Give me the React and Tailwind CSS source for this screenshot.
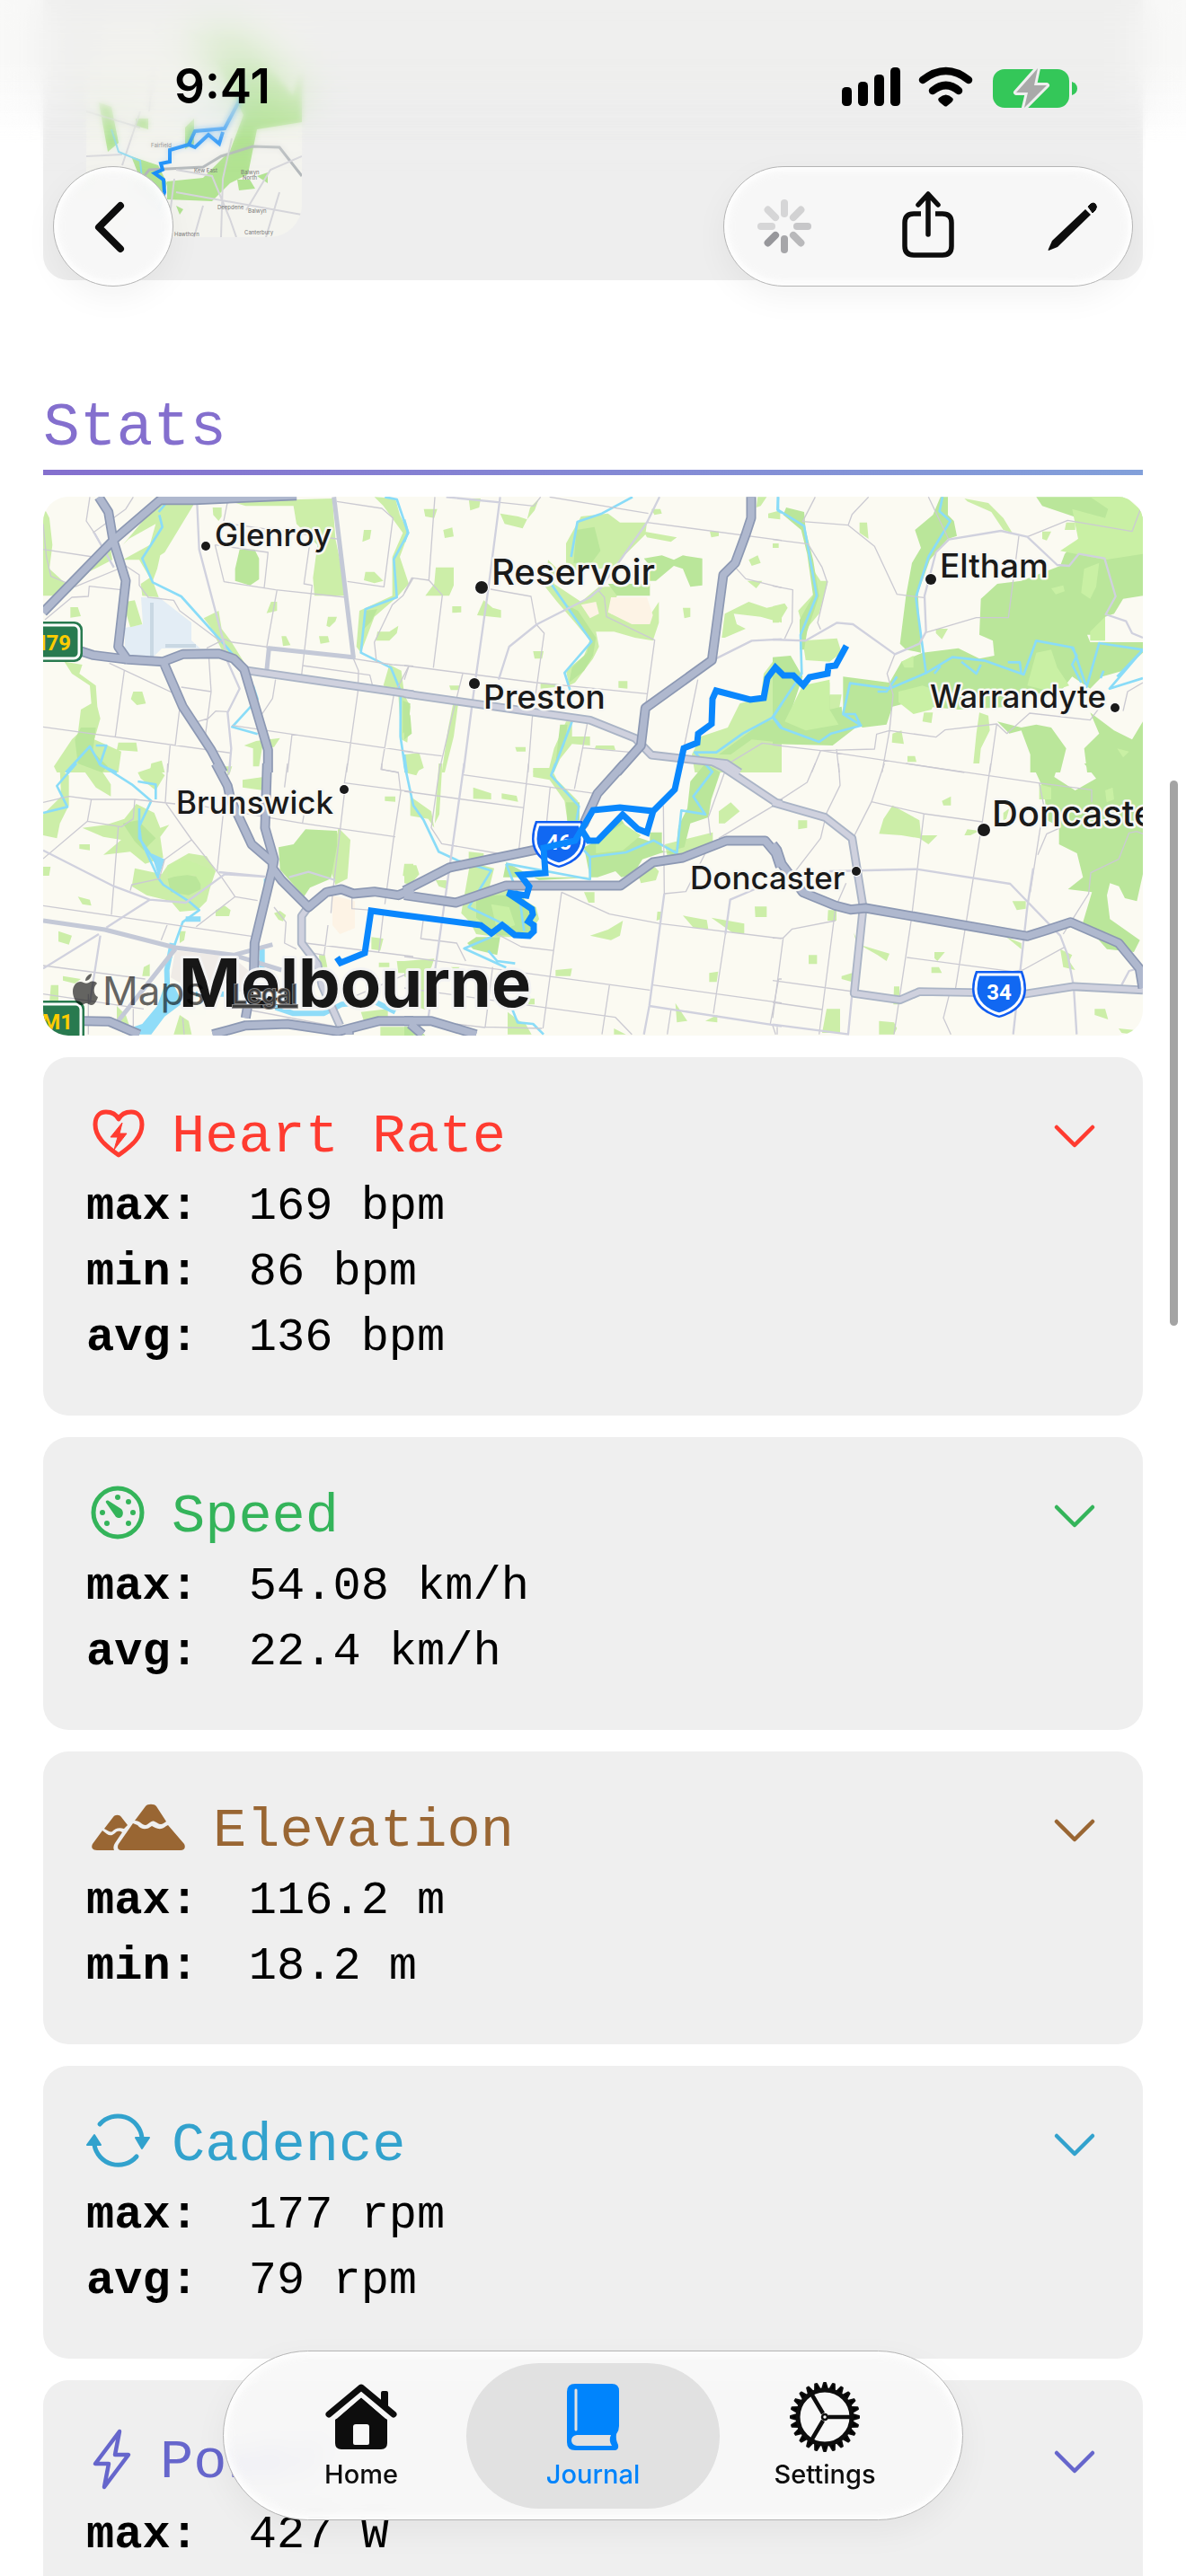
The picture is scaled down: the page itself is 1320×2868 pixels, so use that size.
import { useState } from "react";

const tiles = [
  {
    x: -8, y: -13,
    parks: "M24 70L45 110 55 200 45 280 100 330 255 250 250 215 130 340 100 370 24 370Z M435 60H530L430 225 415 235 405 280 390 320 410 375 355 370 350 330 380 310 345 250 290 250 380 200 400 130 310 180 290 200 390 80Z M650 55L990 45 1000 180 1040 370 930 370 925 310 940 200 870 130 860 70 700 70Z M590 75h30v30l-10 15-18-20Z M300 390l30-5 25 80-40 10-15-50Z M115 408h25l10 30-35 5Z M785 390h20v30l-35 8Z M560 445l50-25 10 60 30 40 50 80-10 10-70-60-40-80Z M970 470l5-30 30 0-5 15-20 20Z M945 505h30l5 20-30 5Z M820 505h15l15 30-25 3Z M1100 290l30 0 30 30-30 8-35-10Z M1095 150h25l-5 30-25 10Z M1140 490h40l30-20-5 25-25 25-45 0Z M1130 40L1200 45 1215 100 1245 160 1215 240 1245 330 1205 375 1130 440 1085 560 1070 540 1080 420 1190 370 1190 240 1225 160 1160 70Z M95 590l60 10-10 30 55 40 5 70 10 40-20 70 90 40-10 70H70l-10-20 60-90 20-20 10-80 35-20-5-60-60-40Z M325 690h30l12 40-30 5-20-20Z M275 860h60l5 30-70-5Z M695 870l40-15 80-10-20 30-40 5-10 60-20 0 0-60Z M1180 600l40 20 10 80 20 40-10 120-20-10-10-150-50-30Z M385 930l35-10 10 40h-50Z",
    dark: "M680 215h50l15 30v70l-30 20-50-15v-40Z M150 810l50 0-10 80 50 50-20 20-80-30-10-80Z M1100 420l40-5-20 40-30 30Z M1225 720l25 10-5 80-20 20Z",
    minor: "M180 40L168 120 195 160 260 275M325 40L300 80 190 160M24 215L190 240M24 130L35 240 50 305 110 330M130 340L300 270 345 300V335L375 375 460 385 480 420 620 525M30 450L120 375 175 372 178 338 285 350M245 595L480 705M24 808L650 895M295 620L265 840M480 745L465 870M448 870L440 960M485 675L585 690 577 570M585 690L565 840M540 790L575 780 600 755 640 757M570 545L630 515 655 525 1060 580 1190 600 1260 605M640 55L625 130 650 130 1005 180M598 200L775 225 762 345M598 200L628 323 800 350 1035 375M915 190L895 330 922 335 887 635M805 350L770 545M1005 55L1155 78 1192 110 1162 340 1040 322M1260 310L1225 370 1190 400 1130 525 1137 590M890 603L1115 635 1125 675M1060 580L1077 620 1075 690 1037 960M800 650L790 713 755 765M655 803L1260 892M855 833L840 960M1245 605L1195 700 1152 950 1210 960",
    secondary: "M538 60L545 215 628 530 640 590 680 680 640 760 652 880 645 960M195 160L260 275",
    trunk: "M995 40L1060 575 778 545 770 625",
    major: "M695 618L1260 700",
    motorway: "M210 40L242 90 258 185 300 320 275 540 310 590M24 425L258 185 415 50 530 50 870 35M120 545L190 568 310 583 425 590 490 565 610 563 660 580 695 615 775 885V960M425 590L490 740 585 885 625 960",
    water: "M435 60L410 90M412 100L422 140 355 245 390 325 485 372 640 545 660 570M725 670L740 715 655 808 740 832M1165 40L1205 48 1243 160 1195 248 1205 375 1100 415 1085 560 1185 610 1218 690 1217 840 1235 960M100 960L180 873 215 935 270 960M200 870H235L215 930",
  },
  {
    x: 402, y: -13,
    parks: "M320 95l60 10 30 10-15 30-60-15Z M65 80h45l-10 30-30-5Z M215 45h40l-5 30-30 10Z M450 45l-15 40-25 30 10-40Z M130 150l30-8 5 30-30 5Z M105 275h60v60l-15 35-80 0 30-40Z M160 405h30v20l-30 2Z M245 430l20-45 30 25 28 8v25l-80-8Z M430 555h35l-5 25-25 0Z M715 655h30v25l-30-3Z M590 105l90-10 40 30h90l-5 40-60 60-50 50-100 10-55 0 0-90Z M480 250l30 30-10 50 90 60 60-50 160 0-100 30-20 60 120 20 40-60v70l-20 60-60-10-70-20-60 0 10 50-20 40-60 80-20 10-10-50 60-50 20-50-50-60-60-70-40-50Z M800 155l110 20-20 15-80-15Z M825 80h30l5 15-25 5Z M1020 155h30v15l-25 5Z M1060 510l10-80 80-40 60 20 50-10v60l-70-20-90-10 10 35 30 15-70 30Z M1150 250l30-15 10 25-30 10Z M1145 320h50l-20 25Z M930 410h25v30l-20 5Z M150 670h35l-5 15-25 0Z M455 660l60 5-10 10-50 5Z M370 875h35v15h-30Z M165 720l-20 100-20 140 10 0 30-120 15-110Z M0 900l50-5 15 50-30 15H0Z M540 790h20v50h60v30l-60-5-40 50-20 45h-20l20-80Z M640 870h60l5 15-70-3Z M435 945h30v15h-35Z M1180 40h30l-20 30-15 5Z M1215 95l40-10v30l-40-5Z M1238 580h22v380H970l-10-60 30-60 90-30 40-80 70-20 10-80Z",
    dark: "M800 245l60-10 40 15 30-15 65 10v90l-40 5-25-60-30-10-60 50-40 0 20-50Z M680 330h140v40h-110Z M575 150l60-10 20 80-30 40-60 0Z M540 400l40 20 60 90-10 60-30 50-50 40 10-50 50-50 10-50Z M0 730l20 40 5 60-25 20Z M520 800h25l-10 70-30 60Z M1050 900l150-110 60-10v80l-100-10-70 50Z",
    beige: "M690 375h120l20 60-10 30-60 0-80-40Z M590 400l50-10 10 40-30 15Z",
    minor: "M102 40L82 318 25 310 0 360M82 318L127 368 97 610M0 603L440 660 810 697M195 630L160 770 120 940M288 348L423 372 440 465 467 495 427 780 413 960M455 40L432 70 320 58M485 40L815 95M810 125L1260 185M1105 275L1140 313 1260 343M648 352L668 375 675 440 836 518 805 745M612 790L580 960M597 878L760 893M980 650L935 870M0 890L125 905M1075 935L1195 862 1260 870M15 605L0 650",
    secondary: "M320 40L280 350 232 690 197 960M852 40L810 125 655 345 620 375 443 465 350 540 315 650M140 40L320 58M1040 580L1160 520 1260 515",
    major: "M0 697L620 785 770 845 825 902 1075 930 1120 960",
    motorway: "M1158 40V110L1140 165 1105 260 1065 300 1027 585 805 745 790 870 710 960",
    water: "M0 115L12 158 0 190M762 40L660 95 578 123 557 240M490 330L625 523 535 627 555 690M560 790L495 960M1248 40V85l12 8M1260 730L1232 775 1130 830 1042 893H970L1030 960M1232 775L1260 810M0 900L8 960",
  },
  {
    x: 812, y: -13,
    parks: "M0 405l40-10 10 15-30 50H0Z M0 195h20v15H0Z M120 260l40 60 25 0-30 110-50 60-20-70 55-60Z M640 45l80 15 50 50 30 50-30-10-40-60-80-35Z M290 125h25l5 55-30-20Z M545 480h40l-20 35-20-20Z M400 830l30-10 8 45-40-5Z M450 905h25l5 20-30 0Z M505 760h30l-5 35-30-5Z M690 760l30 10 5 50-30 60-5 50h-20l10-100Z M900 155h30l-15 30-15-5Z M980 125l30 0 0 25-35 0Z M100 520L215 512 230 560 190 590 110 585Z M190 700l40 0-10 60-40 0Z",
    dark: "M0 575L60 570 100 640 60 760 110 700 190 660 190 750 230 740 235 770 290 800 200 870 0 865Z M45 75l60 15 5 60 25 100 20 120-40 120-10 60-15 0 0-100 45-80-20-140-20-80-60-50Z M540 40h45v60l20 20 10 50-30 10-60 70-40 110 10 200-50-10-20-20 20-160 20-110 30-50-20-60 60-50 25-60Z M235 640L390 660 430 590 500 560 620 545 690 580 740 570 735 520 690 500 695 380 750 330 830 320 960 270 975 230 1020 180V110L900 70 880 40H1170L1236 90V370L1170 380 1140 430 1110 440V500L1050 500 1060 525H1236V560L1170 620 1100 640 1060 680 1000 640 960 690 860 700 800 740 620 750 520 740 480 720 400 740 380 800 300 810 270 790 235 770Z M750 790l80 20 50-10 50 10 50 70-20 80-100 0v-60l-30-80-40 10Z M1060 760l80 60 60 30 36-60v170H1050l-10-80 50-50Z",
    light: "M1000 80L1110 110 1120 80 1060 40H1180L1236 90V230L1110 250 960 220 1020 180Z M880 560l50-10 20 60 40 60-60 20-80-20Z M420 690l80-20 60 20-30 60-60 15-50-40Z M1040 280l50-20-10 80-20 40-30-20Z M1060 490l50-50v80h-50Z M430 590l40-20 0 40-30 0Z M930 345l40-10 5 20-30 10Z M100 670l90-20 0 100 30 50-110 20-70-30Z M1150 880l40 10-20 20Z",
    minor: "M142 40L100 122 252 134 340 205 415 365 505 376M252 134L265 98 320 40M520 40L588 182M822 170L787 443H680L510 493M0 182L118 197 165 275 182 325 150 460 160 482M0 337L67 350 65 458 40 513M850 173L985 118 1200 155 1228 80M408 565L382 630 402 700 390 820 365 960M0 868L160 887 640 960M130 960L160 887 340 882 347 832 390 820 545 842 575 818 748 798 782 830 858 762 1060 785 1090 745M748 798L725 960M213 882L222 960M1170 755L1185 690 1236 660",
    secondary: "M0 516L110 520 215 460 268 465 408 565 490 530 512 490 507 370 545 225 588 182 762 153 850 173 950 267 990 270 1022 230 1108 245 1145 372 1112 432 1180 455 1200 495 1236 510",
    water: "M18 40L16 82 105 137 147 370 93 500 97 630 0 775 25 810 155 858 195 830 295 803 235 765 258 662 390 680 512 628 478 375 520 240 593 120 557 88 567 40M512 628L600 575 710 587 838 633 880 520 1003 543 1048 675 1090 528 1236 550 1125 680 1236 645M630 590L680 630 695 600M785 592H825L830 630M350 690H380L415 640M540 630L560 605M1000 545L1015 570 1000 600 1030 660M1105 620L1095 645M240 765h35l20 40M1236 550L1150 640",
  },
  {
    x: -8, y: 297,
    parks: "M80 20l30 20v100l-30 60-10 50-46-10V170l60-60Z M150 10h60l40 60v40l-50-30Z M335 135l60 30 20 50 30-10-30 40 10 70-60 20-50-40-90 10 60-50-60-10-70-30 80-10 60-20Z M440 340l70-40 60 10 30 50-20 60-10 40-30 30-60 5-30-35-80-20-50-30 10-60 90 20Z M145 270h35v20l-35-5Z M24 345h25l-5 30H24Z M140 445l40 10 5 20-30-5Z M75 560l45 15-10 30-35-10Z M600 490l30-15 20 15-5 20-45 0Z M795 500l20-8 20 15-10 20-15-5Z M690 55l70-10v45l-70-10Z M1165 110h35v18l-35-3Z M1010 215l40 40-10 130-40 20-20-60Z M1230 335h30v50l-35-10Z M360 680l20-10v40h-25Z M50 740h25v60H45Z M90 710l60 10-20 15-40-10Z M270 810l30 30 20 60h-30l-20-40Z M480 840l30 20 10 45h-60Z M1085 830l90-10v40h-80Z M945 640h20l8 40h-25Z M1120 580l40 5-10 40-30-5Z M1145 665h35v15h-35Z M1205 660h55v40h-50Z M480 560h20l-5 30-15 10Z M340 30l60-20 30 30-30 50-50-40Z M1150 880h110v30h-110Z M625 10h30l-10 30Z",
    dark: "M810 280l50-10 40-50 105 5v50l-20 110-70 30-20 30-80-90Z M440 385l50-15 60 10v40l-40 20-60-10Z M290 200l50-10 60 60-40 40-30-30Z",
    light: "M440 340l60-20 100 40-40 60-30-50-90 10Z",
    beige: "M990 440l75 20v90l-50 20-25-30Z",
    built: "M465 625l190 20 70 60-20 60-220-30-35-20Z",
    minor: "M24 130L110 110 185 120H330L465 135M440 0L432 130 520 255 620 380 665 445 740 458M185 120L172 193 24 318M172 193L285 212 325 185 330 120M275 212L252 505M520 255L430 320 412 385 320 405 315 425M24 475L725 578M665 445L535 545M625 170L605 360M540 140L890 200 1200 245M890 200L895 170M650 0L640 40M840 0L830 80M1040 0L1030 65 1260 95M1155 0V20L1210 30 1218 95 1195 245 1165 470M1030 100L990 440 985 500M1055 430V485L1120 490M795 480L835 530 830 600 870 620M900 600L1260 645M975 540L962 640 905 630M1160 500L1145 630M24 675L365 720M24 770L360 820M440 535L418 590M325 820V905M175 770V905M720 825L1060 890M1245 700L1035 790M490 850L495 905",
    secondary: "M24 290L260 410 380 455 500 465 630 370 765 378M380 455L235 548M24 685L210 570M215 575L180 800M610 363L765 378M845 380L910 362 1000 390",
    trunk: "M24 525L230 555 465 615 660 640 820 690M465 620L275 860M660 640L790 605",
    major: "M905 485L887 510V600L940 670 955 740 1015 875",
    motorway: "M600 0L640 75 650 120 720 270 790 330M772 0L765 215 795 320 790 350M790 350L730 600 728 690 700 850M790 330V350L820 390 910 480 970 430 1020 420 1060 435 1130 428 1210 440 1260 420M160 860L245 862 345 905M590 905L700 875 840 870 1010 895 1145 860H1260M1045 890v15",
    water: "M135 0L70 75 105 145 24 165M210 0L320 70 385 125 345 210 350 255 410 385 425 405 510 460 545 490 490 530 465 600 437 690 440 770M340 60L400 70V120M345 150V250L400 330M765 385V440",
    river: "M455 600L437 690 440 800M530 770H650M755 620V700M800 815L860 835H960L1020 805 1130 795 1200 830M500 520H550",
    lake: "M430 740h30l30 60-60 45-45 60h-60l-30-15 60-20 50-60Z M385 300l45 20-20 60Z",
  },
  {
    x: 402, y: 297,
    parks: "M0 340h40l10 30-30 35-20-5Z M215 295l50 5v20h-50Z M230 80l60 20v20l-60-2Z M325 100l50 8 5 20-55-10Z M20 110l70 50 10 55-20-30-60-10Z M0 0h60l-20 40-40-10Z M115 0h12l-10 170-15 30Z M430 15h60l20 40 70 70 5 80-40-10-10-70-50-70-55-10Z M105 390h35l5 30-30-10Z M220 330l80 20-20 80 60-10 100 60 10 40-40 60H310l-70-10-20-40-30-30Z M620 575l60-20 50-30-10 50-30 15Z M1050 160l40-30 30 30-50 40h-20Z M1170 478h40v35h-38Z M930 508l80 15 5 30-50-5Z M1025 515l110 20v35l-40-5Z M1018 700l30-5-5 35h-25Z M905 800l40 60-35 5Z M1005 860l40-20v25Z M505 690l55-5-5 25h-50Z M700 885l40 20h-40Z M345 830l40 30 20 10 20 35h-80Z M845 495h15l-3 25-15 5Z M0 660l100-8-10 30-20 10v130l-30-10-20-90-20-10Z M600 430h35v35h-20Z M410 785h25v20h-20Z M155 680h30l-10 10Z M780 370l50-30 20 20-10 30-50 10Z M870 270l160-40 0 30-100 50-50 10Z",
    dark: "M340 330l110 60 170-10-20-100 60-30 60-70 40 60 60 20 0-30h40l0 60 45 20 10-100 30-60 10-90 50-60 50 30-30 90-10 60-60 20-20 80-80 20-60 20-30 50-40 10-20-20-60 20H330Z M240 440l150 0 40 50-10 80-110 5-70-60Z M240 580h80l-10 60-80-20-20-20Z M540 130h45v60l-40 10Z M0 880h40l30 28H0Z",
    light: "M640 260l90-60 60 40-60 50-90 10Z M290 470l60 10 20 60-60 20Z",
    minor: "M0 93L400 148M197 38L635 100M415 0L383 285M120 0L90 215 125 268 310 300M487 80L475 200M585 0L568 85M865 140L868 435 940 428 1020 270M1080 0L1015 180 1022 240M1235 140L1050 250M525 430L685 503 855 535 1260 585M525 430L463 885M65 510L55 585 175 600 205 660M310 570L390 612 500 625M0 645L820 757M830 740L1260 800M685 740L660 905M0 750L705 848 760 905M295 680L270 880 460 885M1260 720L1250 720 1222 870M1072 570L1032 835M890 825L878 905M130 865L270 882M1245 880v25",
    secondary: "M200 0L80 850M868 435L818 810 800 905M818 810L1260 878M1170 420L1088 455 1072 570",
    major: "M1030 -5L1060 10 1240 130 1260 135",
    motorway: "M735 0L645 100 600 200 550 260 440 288 150 348 0 425M0 440L172 465 340 408H722L830 330 930 315 1075 258H1205L1240 300 1255 345M0 860H90L240 905M20 870L60 905",
    water: "M0 0L30 140 65 190 115 295 180 325 290 358 215 480 350 545M505 0L490 40 583 143 575 190M290 580L200 618 340 682M360 820L378 865 430 870 465 905M340 335L620 387V312L600 290M620 312L740 297 832 257 910 300 925 157 1005 170 965 110 1030 25M340 335L385 450 400 560M280 625L310 660 370 668",
  },
  {
    x: 812, y: 297,
    parks: "M370 185l30-45 90 50 5 50h55l-30 30-30-20-60-10-75-5Z M565 125l30-15v30h-25Z M85 190h30v25l-30 5Z M640 240l10-20 40 5-30 15Z M770 165l20-15-10 35-10 5Z M800 460h45v25l-30 5Z M185 490h28v35h-30Z M270 565l20 40 100 30-10 25-30-20-70-40Z M120 640h28v30h-28Z M540 630h35l-25 30-10-10Z M530 680h25l10 20h-35Z M230 710l35-10v30l-35-10Z M780 580l50 20v20Z M960 620l40 20-10 20 20 30-40-10Z M1075 820h35l10 35-45-15Z M1155 885l50 5v15l-40-5Z M405 745h18v60h-20Z M180 820h45v80h-60Z M355 860l50 5 10 20-10 20h-50Z",
    dark: "M865 0h90l-15 45 70 45 70-40-40-50h196v370l-20 90-40-10-20-40-30-10-10 40 10 80 100 70-20 40-90-10-80-90 30-100-80-10 50-40-20-80-60-30v-60l-40-20-10-100Z",
    light: "M890 70l40 10 0 40-40 0Z M1110 90l25-10 5 40-25 10Z",
    minor: "M142 0L115 63 20 125M220 0L225 73 180 165 160 250 60 380M373 0L330 128 268 250M330 128L505 168 700 195M445 0L885 65 1065 88V130M728 0L700 195 610 755M505 168L463 520 405 905M890 65L905 140 860 430M0 583H35L65 553 210 525M245 400L210 480 155 905M35 583L0 850M0 725L270 762M0 798L165 822M0 875L10 905M448 648L800 695 835 690 975 613M885 305L915 235 960 215M1236 235L1215 227 1190 232 1155 320 1062 365 1055 435 970 570M590 770L570 850 595 905",
    secondary: "M190 360L480 353 793 402 960 575 985 640 1005 745 1015 905M870 350L850 480 803 905M265 770L252 905M0 872L255 905M1165 740L1190 693 1236 680",
    major: "M0 130L175 180 265 250 302 480 272 768 425 790 490 762 660 765 840 770 1005 745 1236 757",
    motorway: "M0 270L15 290 30 335 100 430 210 475 260 488 310 483 850 577 920 555 995 530 1155 600 1225 685 1236 750",
  },
];

// Drawn bottom to top across every tile
const layers = [
  { key: "parks", fill: "#cceea8" },
  { key: "dark", fill: "#bae69a" },
  { key: "light", fill: "#c9f0a4" },
  { key: "beige", fill: "#fdf3e5" },
  { key: "built", fill: "#efebe7" },
  { key: "lake", fill: "#8fdcf8" },
  { key: "river", stroke: "#8fdcf8", width: 18 },
  { key: "water", stroke: "#8adcf8", width: 8 },
  { key: "minor", stroke: "#cbcad2", width: 4 },
  { key: "secondary", stroke: "#d0d1de", width: 7 },
  { key: "trunk", stroke: "#c4c9d7", width: 15 },
  { key: "major", stroke: "#aab4c6", width: 29 },
  { key: "major", stroke: "#cfd1de", width: 18 },
  { key: "motorway", stroke: "#8c98b3", width: 33 },
  { key: "motorway", stroke: "#afb8ce", width: 23 },
];

const places = [
  { name: "Glenroy", x: 191, y: 55, size: 35, dot: [181, 55, 5] },
  { name: "Reservoir", x: 499, y: 98, size: 40, dot: [488, 101, 7] },
  { name: "Preston", x: 490, y: 236, size: 37, dot: [480, 208, 6] },
  { name: "Eltham", x: 998, y: 90, size: 37, dot: [988, 92, 6] },
  { name: "Warrandyte", x: 987, y: 235, size: 35, dot: [1193, 235, 5] },
  { name: "Brunswick", x: 148, y: 353, size: 35, dot: [335, 326, 5] },
  { name: "Doncaster", x: 720, y: 437, size: 35, dot: [905, 417, 5] },
  { name: "Doncaster East", x: 1056, y: 367, size: 40, dot: [1047, 371, 7] },
];

const Shield = ({ x, y, label }) => (
  <g transform={`translate(${x} ${y})`}>
    <path d="M4 0H56Q60 10 60 20C60 38 46 48 30 52C14 48 0 38 0 20Q0 10 4 0Z" fill="#0f5cf0" />
    <path d="M7 4H53Q56 12 56 20C56 35 44 44 30 48C16 44 4 35 4 20Q4 12 7 4Z" fill="#1168f2" stroke="#fff" strokeWidth="3" />
    <text x="30" y="32" textAnchor="middle" fontSize="24" fontWeight="700" fill="#fff" className="font-[Roboto,sans-serif]">{label}</text>
  </g>
);

const RideMap = () => (
  <svg
    viewBox="0 0 1224 600"
    preserveAspectRatio="xMidYMid slice"
    role="img"
    aria-label="Map of the ride"
    className="block w-full h-[600px] rounded-[28px] bg-[#fbfaf2] font-['Inter',sans-serif]"
  >
    <path d="M109 112h20l36 28v20l10 9h-43l-10 10-31-3v-30l20-4Z" fill="#e3edf5" />
    <path d="M121 118v61M136 166h34" stroke="#c9d8e3" strokeWidth="4" />
    {layers.map((layer, idx) =>
      tiles.map((tile) =>
        tile[layer.key] ? (
          <path
            key={`${idx}-${tile.x}-${tile.y}`}
            d={tile[layer.key]}
            transform={`translate(${tile.x} ${tile.y}) scale(${1 / 3})`}
            fill={layer.fill || "none"}
            stroke={layer.stroke || "none"}
            strokeWidth={layer.width || 0}
            strokeLinejoin="round"
          />
        ) : null
      )
    )}

    <rect x="-20" y="139" width="64" height="45" rx="9" fill="#287a4f" />
    <rect x="-20" y="143" width="60" height="37" rx="6" fill="none" stroke="#fff" strokeWidth="3" />
    <text x="31" y="171" textAnchor="end" fontSize="24" fontWeight="700" fill="#ffcc00" className="font-[Roboto,sans-serif]">M79</text>
    <rect x="-20" y="561" width="66" height="48" rx="9" fill="#287a4f" />
    <rect x="-20" y="565" width="62" height="40" rx="6" fill="none" stroke="#fff" strokeWidth="3" />
    <text x="33" y="593" textAnchor="end" fontSize="24" fontWeight="700" fill="#ffcc00" className="font-[Roboto,sans-serif]">M1</text>
    <Shield x={544} y={361} label="46" />
    <Shield x={1034} y={528} label="34" />

    <path
      d="M327 513L331 519 358 508 365 461 402 466 487 477 499 486 511 477 525 488 541 489 546 484V477L540 473 545 465 544 459 517 441 538 444 541 434 531 421 559 419 557 391 592 383 612 349 642 346 679 350 703 326 713 280 728 274 729 264 744 253 745 225 749 216 787 226 802 224 806 202 815 190 824 199H835L846 210 853 201 873 197 874 189 882 188 894 166M679 350L672 374 662 370 645 354 617 383H607L600 372"
      fill="none"
      stroke="#0a87fd"
      strokeWidth="7"
    />

    {places.map((place) => (
      <g key={place.name}>
        <circle cx={place.dot[0]} cy={place.dot[1]} r={place.dot[2]} fill="#1a1a1a" stroke="#fff" strokeWidth="2" paintOrder="stroke" />
        <text
          x={place.x}
          y={place.y}
          fontSize={place.size}
          fontWeight="500"
          fill="#1a1a1a"
          stroke="#f7f7f3"
          strokeWidth="5"
          strokeLinejoin="round"
          paintOrder="stroke"
        >
          {place.name}
        </text>
      </g>
    ))}
    <text x="151" y="568" fontSize="74" fontWeight="700" fill="#171717" stroke="#f3f3f3" strokeWidth="6" strokeLinejoin="round" paintOrder="stroke">
      Melbourne
    </text>

    <g fill="#000" opacity="0.6">
      <path d="M60 542C58 539 54 539 51 541C49 542 47 542 45 541C39 538 33 543 33 551C33 558 38 566 42 566C45 566 46 564 48 564C50 564 51 566 54 566C57 566 60 561 61 557C56 555 55 546 60 542Z" />
      <path d="M47 539C47 535 50 532 54 531C54 535 51 539 47 539Z" />
      <text x="66" y="566" fontSize="44">Maps</text>
    </g>
    <a href="#legal">
      <text x="211" y="564" fontSize="28" fill="#3c3c3c" stroke="#7c7c7c" strokeWidth="2" paintOrder="stroke" textDecoration="underline">Legal</text>
    </a>
  </svg>
);

const RideThumbnail = () => (
  <svg viewBox="0 0 240 240" role="img" aria-label="Ride thumbnail" className="block size-60 rounded-[36px] bg-[#f4f4ef]">
    <path d="M110 12l70 10 50 60 10-30v60l-50 8-10 50-20 10-20 20-50-2 0-20 40-4 30-30 15-40-30-60ZM14 90l14 5 8 40-12 10ZM50 150l30 10 10 20-6 20-26-30ZM118 180l20-9-5 16ZM168 176h14l6 10-18 2ZM55 108h14l0 12-14-4ZM0 170h10v12H0ZM110 118l10-10 0 28-10 6ZM190 172l12-4 0 12ZM100 205l8 4-4 6Z" fill="#b2e392" />
    <path d="M20 240L50 190 70 165 130 162 150 150 185 139 215 140 240 172" fill="none" stroke="#b4b9bc" strokeWidth="3" />
    <path d="M0 150L40 148M100 190L240 215M120 240L130 205M150 240L152 175 162 130M178 210L205 165 240 150M60 100L40 160M100 165L140 172 160 220 167 240M200 240L215 190M98 175l-8 65M0 100L60 118M80 0L70 100M150 0L120 90" fill="none" stroke="#d5d5da" strokeWidth="2" />
    <path d="M28 120L36 145 60 155 62 175" fill="none" stroke="#8ad8f0" strokeWidth="2" />
    <path d="M173 83L154 119 121 122 114 137 93 143V156L83 158 85 165 76 169 86 176 87 190 80 210M114 137L121 140 136 126 148 136 152 123" fill="none" stroke="#1a8ffa" strokeWidth="4" />
    <path d="M173 83L176 60" fill="none" stroke="#8cc4f5" strokeWidth="4" />
    <g fill="#777" fontSize="6" className="font-['Inter',sans-serif]">
      <text x="72" y="140">Fairfield</text>
      <text x="120" y="168">Kew East</text>
      <text x="172" y="170">Balwyn</text>
      <text x="174" y="176">North</text>
      <text x="146" y="209">Deepdene</text>
      <text x="180" y="213">Balwyn</text>
      <text x="176" y="237">Canterbury</text>
      <text x="98" y="239">Hawthorn</text>
    </g>
  </svg>
);

const HeartIcon = () => (
  <svg className="w-[71px] h-[82px] shrink-0" viewBox="0 0 71 82" fill="none" aria-hidden="true">
    <path d="M36 61C20 50 10 40 10 27C10 18 15 13 22 13C28 13 33 15 36 21C39 15 44 13 50 13C57 13 62 18 62 27C62 40 52 50 36 61Z" stroke="currentColor" strokeWidth="5" strokeLinejoin="round" />
    <path d="M40 25L27 41h8l-4 14L45 37h-8l3-12Z" fill="currentColor" stroke="currentColor" strokeWidth="1" strokeLinejoin="round" />
  </svg>
);

const SpeedIcon = () => (
  <svg className="w-[71px] h-[82px] shrink-0" viewBox="0 0 71 82" fill="currentColor" aria-hidden="true">
    <circle cx="35" cy="36" r="27" fill="none" stroke="currentColor" strokeWidth="5" />
    <circle cx="35" cy="19" r="3" />
    <circle cx="47" cy="24" r="3" />
    <circle cx="52" cy="36" r="3" />
    <circle cx="47" cy="48" r="3" />
    <circle cx="23" cy="48" r="3" />
    <circle cx="18" cy="36" r="3" />
    <path d="M22 25C21 23 23 22 25 23L39 32C43 36 40 43 36 42C33 42 32 39 31 38Z" />
  </svg>
);

const MountainIcon = () => (
  <svg className="w-[117px] h-[82px] shrink-0" viewBox="0 0 117 82" fill="currentColor" aria-hidden="true">
    <path d="M66 13C68 10 76 10 78 13L89 30L86 32C82 35 79 31 76 30C72 28 69 34 66 34C62 34 60 29 54 29Z" />
    <path d="M52 32L57 34C62 40 68 39 73 35C77 37 82 41 89 35L91 34L109 55C111 59 109 62 105 62H39C35 62 34 58 36 55Z" />
    <path d="M30 25C32 22 37 22 39 25L46 34L42 38C36 36 32 38 29 41C26 43 23 39 20 38Z" />
    <path d="M18 40C24 45 27 48 33 42C36 40 38 41 40 42L32 54C30 57 30 60 31 62H12C7 62 5 59 7 55Z" />
  </svg>
);

const CadenceIcon = () => (
  <svg className="w-[71px] h-[82px] shrink-0" viewBox="0 0 71 82" fill="none" aria-hidden="true">
    <path d="M15 17A27 27 0 0 1 62 32M9 40A27 27 0 0 0 56 53" stroke="currentColor" strokeWidth="5" strokeLinecap="round" />
    <path d="M55 32H70L62 44Z M1 40H16L9 29Z" fill="currentColor" stroke="currentColor" strokeWidth="2" strokeLinejoin="round" />
  </svg>
);

const PowerIcon = () => (
  <svg className="w-[58px] h-[88px] shrink-0" viewBox="0 0 58 88" fill="none" aria-hidden="true">
    <path d="M37 9L10 45H25L20 71L47 35H32L37 9Z" stroke="currentColor" strokeWidth="4.5" strokeLinejoin="round" />
  </svg>
);

const stats = [
  {
    title: "Heart Rate", icon: <HeartIcon />, color: "text-[#ff3b30]",
    rows: [["max:", "169 bpm"], ["min:", "86 bpm"], ["avg:", "136 bpm"]],
  },
  {
    title: "Speed", icon: <SpeedIcon />, color: "text-[#34b45a]",
    rows: [["max:", "54.08 km/h"], ["avg:", "22.4 km/h"]],
  },
  {
    title: "Elevation", icon: <MountainIcon />, color: "text-[#996633]",
    rows: [["max:", "116.2 m"], ["min:", "18.2 m"]],
  },
  {
    title: "Cadence", icon: <CadenceIcon />, color: "text-[#32a2cd]",
    rows: [["max:", "177 rpm"], ["avg:", "79 rpm"]],
  },
  {
    title: "Power", icon: <PowerIcon />, color: "text-[#6666cc]",
    rows: [["max:", "427 W"]],
  },
];

const StatCard = ({ title, icon, color, rows }) => (
  <section className="rounded-[28px] bg-[#efefef] px-12 pt-12 pb-[50px]">
    <div className={`flex items-center gap-6 ${color}`}>
      {icon}
      <h3 className="text-[62px] leading-[82px]">{title}</h3>
      <button type="button" aria-label={`Expand ${title}`} className="ml-auto">
        <svg className="w-[60px] h-10" viewBox="0 0 60 40" fill="none" aria-hidden="true">
          <path d="M12 9L32 29L52 9" stroke="currentColor" strokeWidth="4.5" strokeLinecap="round" strokeLinejoin="round" />
        </svg>
      </button>
    </div>
    <dl className="text-[52px] leading-[73px] text-black">
      {rows.map(([label, value]) => (
        <div key={label} className="flex gap-14">
          <dt className="font-bold">{label}</dt>
          <dd>{value}</dd>
        </div>
      ))}
    </dl>
  </section>
);

const StatusBar = () => (
  <div className="flex items-center justify-between pl-[194px] pr-[121px] pt-16 h-32">
    <span className="text-[53px] leading-none font-semibold">9:41</span>
    <svg className="w-[262px] h-12" viewBox="0 0 262 48" aria-hidden="true">
      <rect y="25" width="11" height="21" rx="4.5" />
      <rect x="18" y="19" width="11" height="27" rx="4.5" />
      <rect x="36" y="11" width="11" height="35" rx="4.5" />
      <rect x="54" y="3" width="11" height="43" rx="4.5" />
      <path d="M90 17Q116 -3 141 17M101 29Q116 17 130 29" fill="none" stroke="#000" strokeWidth="8.5" strokeLinecap="round" />
      <path d="M108 37Q116 30 123 37Q125 39 122 42L117 46Q116 47 114 46L109 42Q106 39 108 37Z" />
      <rect x="168" y="5" width="85" height="43" rx="13" fill="#34c759" />
      <path d="M256 19Q262 21 262 26.500Q262 32 256 34Z" fill="#34c759" />
      <path d="M218 4L194 31H207L203 48L228 23H214Z" fill="#a9a9a9" stroke="#efefef" strokeWidth="6" strokeLinejoin="round" paintOrder="stroke" />
    </svg>
  </div>
);

const glass = "border border-[#b4b4b4] bg-[#f7f7f7]/90 backdrop-blur-md shadow-[0_12px_36px_rgba(0,0,0,0.05),inset_0_0_10px_4px_#ffffff]";

const spokes = ["#d6d6d7", "#d2d2d3", "#c7c7c9", "#b9b9bb", "#a6a6a9", "#97979b", "#d6d6d7", "#d6d6d7"];

const Toolbar = () => (
  <div className="flex items-center justify-between px-[59px] pt-[57px]">
    <button type="button" aria-label="Back" className={`size-[134px] rounded-full grid place-items-center ${glass}`}>
      <svg className="size-16" viewBox="0 0 64 64" fill="none" aria-hidden="true">
        <path d="M40 9L16 33L40 57" stroke="#0d0d0d" strokeWidth="8" strokeLinecap="round" strokeLinejoin="round" />
      </svg>
    </button>
    <div className={`h-[134px] w-[456px] px-[27px] rounded-full flex items-center justify-between ${glass}`}>
      <svg className="size-20" viewBox="-40 -40 80 80" role="img" aria-label="Loading">
        {spokes.map((color, idx) => (
          <path key={idx} d="M0 -14V-26" stroke={color} strokeWidth="8" strokeLinecap="round" transform={`rotate(${idx * 45})`} />
        ))}
      </svg>
      <button type="button" aria-label="Share">
        <svg className="size-20" viewBox="0 0 80 80" fill="none" stroke="#0d0d0d" strokeWidth="5.5" strokeLinecap="round" strokeLinejoin="round" aria-hidden="true">
          <path d="M32 26H24Q14 26 14 36V62Q14 72 24 72H56Q66 72 66 62V36Q66 26 56 26H48" strokeLinecap="butt" />
          <path d="M40 49V5M29 16L40 4L51 16" />
        </svg>
      </button>
      <button type="button" aria-label="Edit">
        <svg className="size-20" viewBox="0 0 80 80" fill="#0d0d0d" aria-hidden="true">
          <path d="M55 21L61 27L24 63L14 67Q13 67 14 65L18 56Z" />
          <path d="M58 18L61 15Q64 13 66 15Q69 18 66 22L63 25Z" stroke="#0d0d0d" strokeWidth="1" />
        </svg>
      </button>
    </div>
  </div>
);

const HomeIcon = () => (
  <svg className="size-20" viewBox="0 0 80 80" fill="#0d0d0d" aria-hidden="true">
    <path d="M40 18L69 43V69Q69 76 62 76H18Q11 76 11 69V43Z M31 51V69Q31 71 33 71H47Q49 71 49 69V51Q49 48 46 48H34Q31 48 31 51Z" fillRule="evenodd" />
    <path d="M11 40L40 15L69 40" fill="none" stroke="#f7f7f7" strokeWidth="5" />
    <path d="M62 13Q62 11 64 11H68Q70 11 70 13V32L62 25Z" />
    <path d="M4 37L40 7L76 37" fill="none" stroke="#0d0d0d" strokeWidth="7" strokeLinecap="round" strokeLinejoin="round" />
  </svg>
);

const BookIcon = () => (
  <svg className="size-20" viewBox="0 0 80 80" fill="#0084fc" aria-hidden="true">
    <path d="M20 3H61Q69 3 69 11V50Q69 55 66 59Q65 65 68 71Q69 76 65 77H20Q11 77 11 68V12Q11 3 20 3ZM22 60Q16 61 16 66Q16 71 22 72H61Q57 66 60 60Z" fillRule="evenodd" />
    <path d="M21 10V54" stroke="#e2e2e2" strokeWidth="3" strokeLinecap="round" />
  </svg>
);

const GearIcon = () => (
  <svg className="size-20" viewBox="-40 -40 80 80" stroke="#0d0d0d" aria-hidden="true">
    {Array.from({ length: 24 }, (_, idx) => (
      <path key={idx} d="M-3 -31L-1 -38H1L3 -31Z" strokeWidth="2" strokeLinejoin="round" transform={`rotate(${idx * 15})`} />
    ))}
    <circle r="30" fill="none" strokeWidth="5" />
    <path d="M4 0H30M-2 -4L-15 -26M-2 4L-15 26" strokeWidth="4.5" />
    <circle r="3" fill="none" strokeWidth="2.5" />
  </svg>
);

const tabs = [
  { name: "Home", icon: <HomeIcon /> },
  { name: "Journal", icon: <BookIcon /> },
  { name: "Settings", icon: <GearIcon /> },
];

const TabBar = ({ active, onSelect }) => (
  <nav className={`fixed bottom-[62px] left-1/2 -translate-x-1/2 w-[824px] h-[189px] px-6 rounded-full grid grid-cols-3 items-center ${glass}`}>
    {tabs.map((tab) => (
      <a
        key={tab.name}
        href={`#${tab.name.toLowerCase()}`}
        onClick={() => onSelect(tab.name)}
        aria-current={active === tab.name ? "page" : undefined}
        className={`-mx-3 h-[162px] rounded-full flex flex-col items-center pt-5 gap-1 text-[29px] leading-10 font-medium ${
          active === tab.name ? "bg-[#e1e1e1] text-[#0084fc]" : "text-[#0d0d0d]"
        }`}
      >
        {tab.icon}
        {tab.name}
      </a>
    ))}
  </nav>
);

const App = () => {
  const [active, setActive] = useState("Journal");

  return (
    <div className="h-screen overflow-hidden bg-white text-black font-['Inter',sans-serif]">
      <main className="px-12 font-['Liberation_Mono',monospace]">
        <div className="rounded-b-[28px] bg-[#eeeeee] px-12 pt-6 pb-12">
          <RideThumbnail />
        </div>

        <h2 className="mt-[123px] mb-1 text-[68px] leading-[84px] text-[#846fce]">Stats</h2>
        <div className="h-[6px] bg-linear-to-r from-[#846fce] to-[#82a0da]" />

        <div className="mt-6 space-y-6">
          <RideMap />
          {stats.map((stat) => (
            <StatCard key={stat.title} {...stat} />
          ))}
        </div>
      </main>

      {/* Content fades out under the status bar */}
      <div className="fixed inset-x-0 top-0 h-48 backdrop-blur-[3px] [mask-image:linear-gradient(to_bottom,black_50%,transparent)]" />
      <div className="fixed inset-x-0 top-0 h-40 bg-[#f0f0ee]/40 backdrop-blur-xl [mask-image:linear-gradient(to_bottom,black_40%,transparent)]" />
      <header className="fixed inset-x-0 top-0">
        <StatusBar />
        <Toolbar />
      </header>

      <TabBar active={active} onSelect={setActive} />
      <div className="fixed right-[9px] top-[869px] w-[9px] h-[607px] rounded-full bg-[#a4a4a4]" />
    </div>
  );
};

export default App;
